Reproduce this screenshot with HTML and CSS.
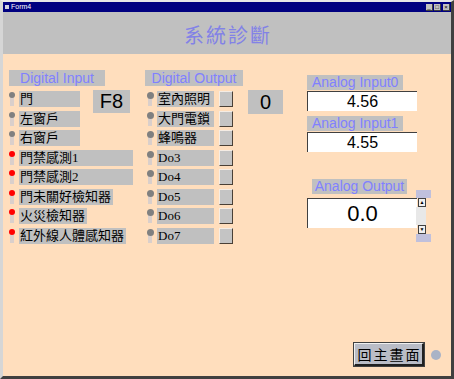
FILE: index.html
```html
<!DOCTYPE html>
<html lang="zh-Hant">
<head>
  <meta charset="UTF-8">
  <title>Form4</title>
  <link rel="stylesheet" href="styles.css">
</head>
<body>
  <div class="window">
    <div class="titlebar">
      <span class="app-icon"></span>
      <span class="title-text">Form4</span>
      <div class="win-btns">
        <span class="win-btn">_</span>
        <span class="win-btn">□</span>
        <span class="win-btn close">×</span>
      </div>
    </div>

    <div class="header">
      <h1>系統診斷</h1>
    </div>

    <div class="content">
      <div class="panels">
        <!-- 數位輸入 -->
        <div class="col col-di">
          <div class="group-label di-label">Digital Input</div>
          <div class="di-top">
            <div class="rows">
              <div class="row"><span class="led"></span><span class="row-label w-short">門</span></div>
              <div class="row"><span class="led"></span><span class="row-label w-short">左窗戶</span></div>
              <div class="row"><span class="led"></span><span class="row-label w-short">右窗戶</span></div>
            </div>
            <div class="value-box f8">F8</div>
          </div>
          <div class="rows rows-more">
            <div class="row"><span class="led on"></span><span class="row-label w-long">門禁感測1</span></div>
            <div class="row"><span class="led on"></span><span class="row-label w-long">門禁感測2</span></div>
            <div class="row"><span class="led on"></span><span class="row-label">門未關好檢知器</span></div>
            <div class="row"><span class="led on"></span><span class="row-label">火災檢知器</span></div>
            <div class="row"><span class="led on"></span><span class="row-label">紅外線人體感知器</span></div>
          </div>
        </div>

        <!-- 數位輸出 -->
        <div class="col col-do">
          <div class="group-label do-label">Digital Output</div>
          <div class="do-top">
            <div class="rows">
              <div class="row"><span class="led"></span><span class="row-label w-do">室內照明</span><span class="do-btn"></span></div>
              <div class="row"><span class="led"></span><span class="row-label w-do">大門電鎖</span><span class="do-btn"></span></div>
              <div class="row"><span class="led"></span><span class="row-label w-do">蜂鳴器</span><span class="do-btn"></span></div>
            </div>
            <div class="value-box zero">0</div>
          </div>
          <div class="rows rows-more">
            <div class="row"><span class="led"></span><span class="row-label w-do">Do3</span><span class="do-btn"></span></div>
            <div class="row"><span class="led"></span><span class="row-label w-do">Do4</span><span class="do-btn"></span></div>
            <div class="row"><span class="led"></span><span class="row-label w-do">Do5</span><span class="do-btn"></span></div>
            <div class="row"><span class="led"></span><span class="row-label w-do">Do6</span><span class="do-btn"></span></div>
            <div class="row"><span class="led"></span><span class="row-label w-do">Do7</span><span class="do-btn"></span></div>
          </div>
        </div>

        <!-- 類比 -->
        <div class="col col-ai">
          <div class="group-label ai-label">Analog Input0</div>
          <div class="text-box ai-box">4.56</div>
          <div class="group-label ai-label second">Analog Input1</div>
          <div class="text-box ai-box">4.55</div>
          <div class="group-label ao-label">Analog Output</div>
          <div class="ao-row">
            <div class="text-box ao-box">0.0</div>
            <div class="spin">
              <span class="spin-cap"></span>
              <span class="spin-arrow">▲</span>
              <span class="spin-track"></span>
              <span class="spin-arrow">▼</span>
              <span class="spin-cap"></span>
            </div>
          </div>
        </div>
      </div>

      <div class="footer">
        <button class="back-btn">回主畫面</button>
        <span class="status-dot"></span>
      </div>
    </div>
  </div>
</body>
</html>
```

FILE: styles.css
```css
body {
  margin: 0;
  font-family: "Liberation Sans", Arial, sans-serif;
  background-color: #ffffff;
}

.window {
  width: 454px;
  height: 379px;
  box-sizing: border-box;
  border-top: 2px solid #e6e6e6;
  border-left: 3px solid #d6d6d6;
  border-right: 3px solid #404040;
  border-bottom: 3px solid #404040;
  background-color: #c0c0c0;
  display: flex;
  flex-direction: column;
}

/* 標題列 */
.titlebar {
  height: 10px;
  background-color: #000080;
  display: flex;
  align-items: center;
  padding: 0 1px 0 2px;
}

.app-icon {
  width: 4px;
  height: 4px;
  background-color: #d0d0e0;
  margin-right: 2px;
}

.title-text {
  color: #ffffff;
  font-size: 7px;
  line-height: 10px;
}

.win-btns {
  margin-left: auto;
  display: flex;
  gap: 1px;
}

.win-btn {
  width: 6px;
  height: 6px;
  background-color: #c0c0c0;
  border-right: 1px solid #404040;
  border-bottom: 1px solid #404040;
  font-size: 6px;
  line-height: 6px;
  text-align: center;
  color: #000;
}

.win-btn.close {
  margin-left: 1px;
}

/* 灰色標題區 */
.header {
  margin-top: 3px;
  height: 39px;
  background-color: #c0c0c0;
}

.header h1 {
  margin: 0;
  font-family: "Noto Sans CJK TC", sans-serif;
  font-weight: 400;
  font-size: 20px;
  line-height: 39px;
  letter-spacing: 2px;
  padding-left: 2px;
  color: #8282e6;
  text-align: center;
}

/* 內容區 */
.content {
  flex: 1;
  background-color: #ffdebd;
  display: flex;
  flex-direction: column;
}

.panels {
  display: flex;
  padding-left: 6px;
}

.col-di {
  width: 136px;
  padding-top: 16px;
}

.col-do {
  width: 162px;
  padding-top: 16px;
}

.col-ai {
  padding-top: 21px;
}

.group-label {
  background-color: #c0c0c0;
  color: #8080ff;
  font-size: 14px;
  height: 16px;
  line-height: 16px;
}

.di-label {
  width: 96px;
  text-align: center;
}

.do-label {
  width: 98px;
  text-align: center;
}

.di-top,
.do-top {
  display: flex;
  margin-top: 5px;
}

.rows {
  display: flex;
  flex-direction: column;
  gap: 3.5px;
}

.rows-more {
  margin-top: 3.5px;
}

.row {
  display: flex;
  height: 16px;
}

.led {
  position: relative;
  width: 10px;
  flex-shrink: 0;
}

.led::after {
  content: "";
  position: absolute;
  left: 1px;
  top: 6px;
  width: 4px;
  height: 9px;
  background-color: #dacfcb;
}

.led::before {
  content: "";
  position: absolute;
  left: 0;
  top: 1px;
  width: 6px;
  height: 6px;
  border-radius: 50%;
  background-color: #808080;
  z-index: 1;
}

.led.on::before {
  background-color: #ff0000;
}

.col-do .led {
  width: 10px;
  margin-left: 2px;
}

.col-do .led::before {
  width: 7px;
  height: 7px;
}

.row-label {
  background-color: #c0c0c0;
  font-family: "Liberation Serif", "Noto Sans CJK TC", serif;
  font-size: 13px;
  line-height: 16px;
  padding: 0 2px 0 1px;
  white-space: nowrap;
  color: #000;
}

.w-short {
  width: 58px;
}

.w-long {
  width: 111px;
}

.w-do {
  width: 54px;
}

.do-btn {
  width: 12px;
  height: 14px;
  margin-left: 5px;
  background-color: #c4c4c4;
  border-top: 1px solid #f4ece4;
  border-left: 1px solid #f4ece4;
  border-right: 1px solid #4a4036;
  border-bottom: 1px solid #4a4036;
}

.value-box {
  background-color: #c0c0c0;
  color: #000;
  font-size: 20px;
  text-align: center;
  margin-top: -1px;
}

.f8 {
  width: 37px;
  height: 23px;
  line-height: 23px;
  margin-left: 13px;
}

.zero {
  width: 35px;
  height: 24px;
  line-height: 24px;
  margin-left: 15px;
}

/* 類比區 */
.ai-label {
  width: 91px;
  height: 15px;
  line-height: 15px;
  padding-left: 5px;
}

.ai-label.second {
  margin-top: 5px;
}

.ao-label {
  width: 95px;
  height: 15px;
  line-height: 15px;
  margin: 27px 0 0 5px;
  text-align: center;
}

.text-box {
  background-color: #ffffff;
  color: #000;
  text-align: center;
  box-sizing: border-box;
  border-top: 1px solid #404040;
  border-left: 1px solid #404040;
}

.ai-box {
  width: 110px;
  height: 20px;
  margin-top: 1px;
  font-size: 16px;
  line-height: 19px;
}

.ao-row {
  display: flex;
  align-items: flex-start;
  margin-top: 4px;
}

.ao-box {
  width: 110px;
  height: 30px;
  font-size: 22px;
  line-height: 29px;
}

.spin {
  display: flex;
  flex-direction: column;
  align-items: flex-start;
  margin: -8px 0 0 -1px;
  width: 16px;
  height: 52px;
}

.spin-cap {
  width: 15px;
  height: 8px;
  background-color: #c0c0dc;
}

.spin-arrow {
  width: 6px;
  height: 7px;
  margin-left: 2px;
  background-color: #f0f0f0;
  border: 1px solid #404040;
  font-size: 5px;
  line-height: 7px;
  text-align: center;
  color: #000;
}

.spin-track {
  flex: 1;
  width: 10px;
  background-color: #e8e8e8;
}

/* 底部 */
.footer {
  margin-top: auto;
  display: flex;
  justify-content: flex-end;
  align-items: center;
  gap: 7px;
  padding: 0 10px 10px 0;
}

.back-btn {
  width: 70px;
  height: 23px;
  box-sizing: border-box;
  background-color: #b9bcc6;
  border-top: 1px solid #f0f0f0;
  border-left: 1px solid #f0f0f0;
  border-right: 2px solid #202020;
  border-bottom: 2px solid #202020;
  outline: 1px solid #404040;
  font-family: "Noto Sans CJK TC", serif;
  font-size: 14px;
  letter-spacing: 2px;
  padding: 0 0 0 2px;
  color: #000;
}

.status-dot {
  width: 10px;
  height: 10px;
  border-radius: 50%;
  background-color: #a9b3c6;
}
```
